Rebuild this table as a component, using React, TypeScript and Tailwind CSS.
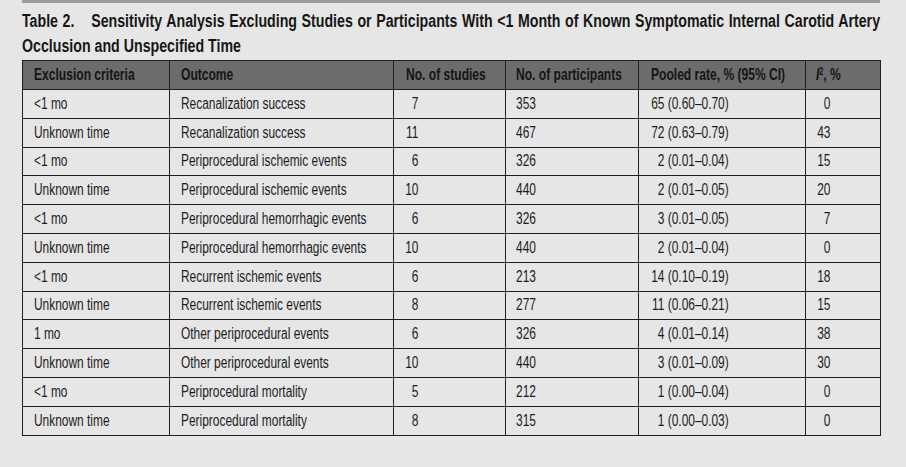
const rows: [string, string, string, string, string, string][] = [
  ["<1 mo", "Recanalization success", "7", "353", "65 (0.60–0.70)", "0"],
  ["Unknown time", "Recanalization success", "11", "467", "72 (0.63–0.79)", "43"],
  ["<1 mo", "Periprocedural ischemic events", "6", "326", "2 (0.01–0.04)", "15"],
  ["Unknown time", "Periprocedural ischemic events", "10", "440", "2 (0.01–0.05)", "20"],
  ["<1 mo", "Periprocedural hemorrhagic events", "6", "326", "3 (0.01–0.05)", "7"],
  ["Unknown time", "Periprocedural hemorrhagic events", "10", "440", "2 (0.01–0.04)", "0"],
  ["<1 mo", "Recurrent ischemic events", "6", "213", "14 (0.10–0.19)", "18"],
  ["Unknown time", "Recurrent ischemic events", "8", "277", "11 (0.06–0.21)", "15"],
  ["1 mo", "Other periprocedural events", "6", "326", "4 (0.01–0.14)", "38"],
  ["Unknown time", "Other periprocedural events", "10", "440", "3 (0.01–0.09)", "30"],
  ["<1 mo", "Periprocedural mortality", "5", "212", "1 (0.00–0.04)", "0"],
  ["Unknown time", "Periprocedural mortality", "8", "315", "1 (0.00–0.03)", "0"],
];

const font = "font-['Liberation_Sans','Arial',sans-serif]";
const cellBorder = "border-[1.5px] border-[#1e1e1e]";

// the print face is condensed; squeeze the text horizontally
const Narrow = ({ children, bold }: { children: React.ReactNode; bold?: boolean }) => (
  <span
    className={`inline-block origin-left whitespace-nowrap ${bold ? "scale-x-[0.71]" : "scale-x-[0.745]"}`}
  >
    {children}
  </span>
);

const Digits = ({ value }: { value: string }) => (
  <span className="inline-block w-[18px] text-right">{value}</span>
);

const Rate = ({ value }: { value: string }) => {
  const [head, ...rest] = value.split(" ");
  return (
    <>
      <Digits value={head} /> {rest.join(" ")}
    </>
  );
};

export default function App() {
  return (
    <div className={`w-[906px] h-[467px] bg-[#e6e6e6] text-[#1c1c1c] ${font} overflow-hidden`}>
      <div className="ml-[22px] w-[858px] h-[3px] bg-[#9c9c9c]" />
      <div className="ml-[22px] w-[1058px] pt-[6px] origin-left scale-x-[0.811] text-[17.5px] font-bold leading-[24.5px] text-[#161616]">
        <div className="[text-align-last:justify]">
          Table 2.<span className="inline-block w-[15px]" /> Sensitivity Analysis Excluding Studies or Participants With &lt;1 Month of Known Symptomatic Internal Carotid Artery
        </div>
        <div>Occlusion and Unspecified Time</div>
      </div>
      <table className="ml-[22px] mt-[2px] w-[858px] border-collapse table-fixed text-[16px]">
        <colgroup>
          <col className="w-[147px]" />
          <col className="w-[224px]" />
          <col className="w-[112px]" />
          <col className="w-[133px]" />
          <col className="w-[167px]" />
          <col className="w-[75px]" />
        </colgroup>
        <thead>
          <tr className="h-[29px] bg-[#6c6c6c] text-[#141414] text-[17px] font-bold">
            <th className={`${cellBorder} pl-[11px] pr-0 text-left`}>
              <Narrow bold>Exclusion criteria</Narrow>
            </th>
            <th className={`${cellBorder} pl-[11px] pr-0 text-left`}>
              <Narrow bold>Outcome</Narrow>
            </th>
            <th className={`${cellBorder} pl-[12px] pr-0 text-left`}>
              <Narrow bold>No. of studies</Narrow>
            </th>
            <th className={`${cellBorder} pl-[10px] pr-0 text-left`}>
              <Narrow bold>No. of participants</Narrow>
            </th>
            <th className={`${cellBorder} pl-[12px] pr-0 text-left`}>
              <Narrow bold>Pooled rate, % (95% CI)</Narrow>
            </th>
            <th className={`${cellBorder} pl-[10px] pr-0 text-left`}>
              <Narrow bold>
                <i>I</i>
                <sup className="text-[10px]">2</sup>, %
              </Narrow>
            </th>
          </tr>
        </thead>
        <tbody>
          {rows.map((r, i) => (
            <tr key={i} className="h-[28.8px]">
              <td className={`${cellBorder} pl-[11px] pr-0`}>
                <Narrow>{r[0]}</Narrow>
              </td>
              <td className={`${cellBorder} pl-[11px] pr-0`}>
                <Narrow>{r[1]}</Narrow>
              </td>
              <td className={`${cellBorder} pl-[11px] pr-0`}>
                <Narrow>
                  <Digits value={r[2]} />
                </Narrow>
              </td>
              <td className={`${cellBorder} pl-[10px] pr-0`}>
                <Narrow>{r[3]}</Narrow>
              </td>
              <td className={`${cellBorder} pl-[12px] pr-0`}>
                <Narrow>
                  <Rate value={r[4]} />
                </Narrow>
              </td>
              <td className={`${cellBorder} pl-[11px] pr-0`}>
                <Narrow>
                  <Digits value={r[5]} />
                </Narrow>
              </td>
            </tr>
          ))}
        </tbody>
      </table>
    </div>
  );
}
